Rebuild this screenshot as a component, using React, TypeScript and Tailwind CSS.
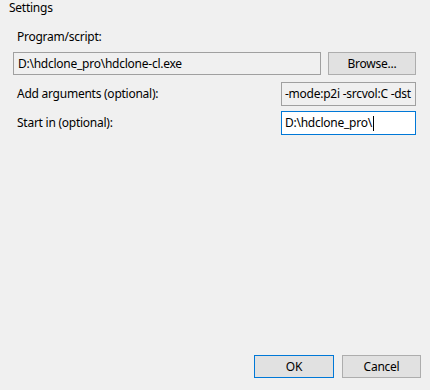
export default function App() {
  const font = { fontFamily: '"Segoe UI", "Noto Sans", sans-serif' };
  return (
    <div
      className="w-[430px] h-[390px] bg-[#f0f0f0] text-[12px] tracking-[-0.25px] text-black flex flex-col overflow-hidden"
      style={font}
    >
      <div className="pl-[9px] pt-[0px] leading-[16px] h-[17px]">Settings</div>
      <div className="pl-[13px] pr-[14px] flex flex-col">
        <div className="pl-[4px] mt-[12px] leading-[16px] h-[18px]">Program/script:</div>
        <div className="flex items-center mt-[5px] gap-[7px]">
          <div className="w-[308px] h-[23px] border border-[#a0a0a0] bg-[#f0f0f0] pl-[4px] leading-[21px] whitespace-nowrap overflow-hidden">
            D:\hdclone_pro\hdclone-cl.exe
          </div>
          <div className="w-[88px] h-[23px] border border-[#adadad] bg-[#e1e1e1] flex items-center justify-center leading-[21px]">
            Browse...
          </div>
        </div>
        <div className="flex items-center mt-[7px] justify-between">
          <div className="pl-[4px] leading-[16px]">Add arguments (optional):</div>
          <div className="w-[135px] h-[24px] border border-[#a0a0a0] bg-[#f0f0f0] pl-[3px] leading-[22px] whitespace-nowrap overflow-hidden">
            -mode:p2i -srcvol:C -dst
          </div>
        </div>
        <div className="flex items-center mt-[5px] justify-between">
          <div className="pl-[4px] leading-[16px]">Start in (optional):</div>
          <div className="w-[135px] h-[24px] border border-[#0078d7] bg-white pl-[3px] leading-[22px] whitespace-nowrap overflow-hidden flex items-center">
            <span>D:\hdclone_pro\</span>
            <span className="inline-block w-[1px] h-[15px] bg-black ml-[1px]" />
          </div>
        </div>
      </div>
      <div className="mt-auto mb-[12px] flex justify-end gap-[8px] pr-[9px]">
        <div className="w-[80px] h-[23px] border border-[#0078d7] bg-[#e1e1e1] flex items-center justify-center leading-[21px]">
          OK
        </div>
        <div className="w-[79px] h-[23px] border border-[#adadad] bg-[#e1e1e1] flex items-center justify-center leading-[21px]">
          Cancel
        </div>
      </div>
    </div>
  );
}
